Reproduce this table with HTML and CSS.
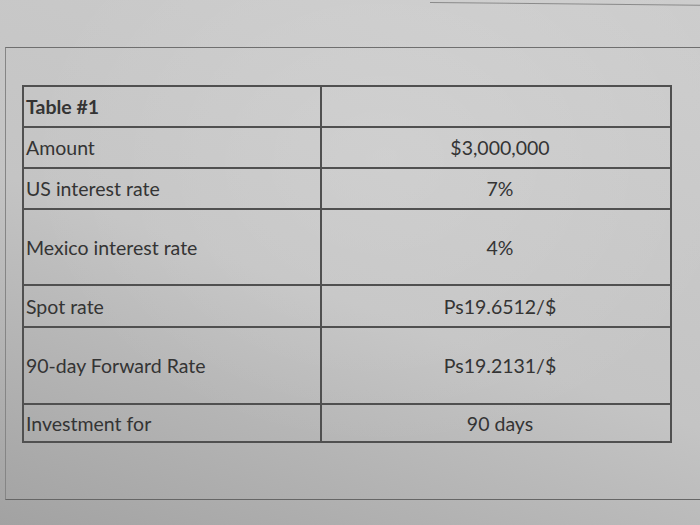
FILE: index.html
```html
<!DOCTYPE html>
<html>
<head>
<meta charset="utf-8">
<link rel="stylesheet" href="styles.css">
</head>
<body>
<div class="screen">
  <div class="topbar"><div class="topline"></div></div>
  <div class="frame">
    <table class="data">
      <tr class="r41"><td class="label bold">Table #1</td><td class="value"></td></tr>
      <tr class="r41"><td class="label">Amount</td><td class="value">$3,000,000</td></tr>
      <tr class="r41"><td class="label">US interest rate</td><td class="value">7%</td></tr>
      <tr class="r76"><td class="label">Mexico interest rate</td><td class="value">4%</td></tr>
      <tr class="r42"><td class="label">Spot rate</td><td class="value">Ps19.6512/$</td></tr>
      <tr class="r77"><td class="label">90-day Forward Rate</td><td class="value">Ps19.2131/$</td></tr>
      <tr class="r38"><td class="label">Investment for</td><td class="value">90 days</td></tr>
    </table>
  </div>
</div>
</body>
</html>
```
FILE: styles.css
```css
html, body {
  margin: 0;
  padding: 0;
}
body {
  width: 700px;
  height: 525px;
  overflow: hidden;
  font-family: Lato, "Open Sans", sans-serif;
  background: #c4c4c4;
}
.screen {
  width: 700px;
  height: 525px;
  position: relative;
  background:
    radial-gradient(ellipse 520px 420px at 55% 30%, rgba(255,255,255,0.14), rgba(255,255,255,0) 70%),
    linear-gradient(200deg, #cdcdcd 0%, #c4c4c4 55%, #a2a2a2 100%);
}
.topbar {
  height: 47px;
  position: relative;
}
.topline {
  position: absolute;
  top: 2px;
  left: 430px;
  width: 270px;
  height: 1px;
  background: #8a8a8a;
  transform: rotate(0.6deg);
  transform-origin: left;
}
.frame {
  margin-left: 5px;
  height: 453px;
  border-top: 1px solid #6f6f6f;
  border-left: 1px solid #858585;
  border-bottom: 1px solid #666;
  padding-top: 37px;
  padding-left: 16px;
  box-sizing: border-box;
}
.data {
  border-collapse: collapse;
  width: 650px;
  color: #343434;
  font-size: 19.5px;
}
.data td {
  border: 2px solid #505050;
  padding: 0 2px;
  vertical-align: middle;
}
.label {
  width: 292px;
  text-align: left;
}
.value {
  text-align: center;
  padding-left: 10px !important;
}
.bold {
  font-weight: bold;
}
.r41 { height: 41px; }
.r42 { height: 42px; }
.r76 { height: 76px; }
.r77 { height: 77px; }
.r38 { height: 38px; }
```
